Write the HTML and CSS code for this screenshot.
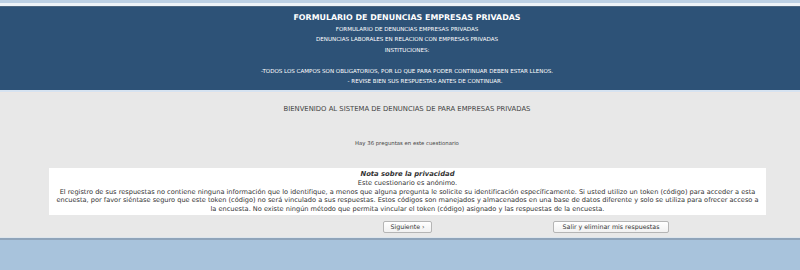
FILE: index.html
```html
<!DOCTYPE html>
<html lang="es">
<head>
<meta charset="utf-8">
<title>Formulario de denuncias</title>
<link rel="stylesheet" href="styles.css">
</head>
<body>
<div class="topline"></div>
<header class="hero">
  <h1 class="hero-title">FORMULARIO DE DENUNCIAS EMPRESAS PRIVADAS</h1>
  <div class="hero-text">
    <p>FORMULARIO DE DENUNCIAS EMPRESAS PRIVADAS</p>
    <p>DENUNCIAS LABORALES EN RELACION CON EMPRESAS PRIVADAS</p>
    <p>INSTITUCIONES:</p>
    <p>&nbsp;</p>
    <p>-TODOS LOS CAMPOS SON OBLIGATORIOS, POR LO QUE PARA PODER CONTINUAR DEBEN ESTAR LLENOS.</p>
    <p class="indent">- REVISE BIEN SUS RESPUESTAS ANTES DE CONTINUAR.</p>
  </div>
</header>
<main class="content">
  <p class="welcome">BIENVENIDO AL SISTEMA DE DENUNCIAS DE PARA EMPRESAS PRIVADAS</p>
  <p class="count">Hay 36 preguntas en este cuestionario</p>
  <section class="privacy">
    <p class="privacy-title">Nota sobre la privacidad</p>
    <p>Este cuestionario es anónimo.</p>
    <p>El registro de sus respuestas no contiene ninguna información que lo identifique, a menos que alguna pregunta le solicite su identificación específicamente. Si usted utilizo un token (código) para acceder a esta encuesta, por favor siéntase seguro que este token (código) no será vinculado a sus respuestas. Estos códigos son manejados y almacenados en una base de datos diferente y solo se utiliza para ofrecer acceso a la encuesta. No existe ningún método que permita vincular el token (código) asignado y las respuestas de la encuesta.</p>
  </section>
  <div class="actions">
    <span></span>
    <button class="btn btn-next" type="button">Siguiente&nbsp;›</button>
    <button class="btn btn-exit" type="button">Salir y eliminar mis respuestas</button>
  </div>
</main>
<footer class="bottom"></footer>
</body>
</html>
```
FILE: styles.css
```css
html, body {
  margin: 0;
  padding: 0;
}
body {
  font-family: "DejaVu Sans", Verdana, sans-serif;
  background: #a8c3dc;
  height: 270px;
  overflow: hidden;
}
p { margin: 0; }

.topline {
  height: 3px;
  background: #bcd0e4;
  border-bottom: 3px solid #eef3f8;
}
.hero {
  background: #2d5277;
  border-top: 1px solid #4b6580;
  border-bottom: 2px solid #d6e3f1;
  color: #ffffff;
  text-align: center;
  padding: 5px 0 3.6px 14px;
}
.hero-title {
  margin: 0;
  font-size: 7.9px;
  font-weight: bold;
  line-height: 12px;
}
.hero-text {
  font-size: 5.55px;
  line-height: 10.4px;
}
.hero-text .indent { padding-left: 36px; }

.content {
  background: #e8e8e8;
  border-top: 1px solid #ece7e4;
  padding: 0 0 4px 14px;
  border-bottom: 1px solid #dde5ec;
  box-shadow: 0 2px 0 #8fa4ba;
  margin-bottom: 2px;
  color: #3a3a3a;
}
.welcome {
  text-align: center;
  font-size: 6.85px;
  line-height: 10px;
  padding-top: 11px;
  color: #444;
}
.count {
  text-align: center;
  font-size: 5.35px;
  line-height: 8px;
  margin-top: 25px;
  color: #444;
}
.privacy {
  background: #ffffff;
  margin: 21px 34px 0 35px;
  padding: 2px 4px 1.2px;
  text-align: center;
  font-size: 6.6px;
  line-height: 8.7px;
  color: #333;
}
.privacy .privacy-title {
  font-weight: bold;
  font-style: italic;
  font-size: 6.8px;
  line-height: 9px;
}
.actions {
  display: grid;
  grid-template-columns: 1fr 1fr 1fr;
  margin: 6px 34px 0 35px;
  align-items: center;
}
.btn {
  font-family: "DejaVu Sans", Verdana, sans-serif;
  font-size: 6.3px;
  height: 12px;
  padding: 0 4px;
  line-height: 10px;
  color: #333;
  background: linear-gradient(#ffffff, #f1f1f1);
  border: 1px solid #b5b5b5;
  border-radius: 2px;
  cursor: pointer;
}
.btn-next {
  justify-self: center;
  width: 49px;
}
.btn-exit {
  justify-self: start;
  margin-left: 26px;
  width: 116px;
}
.bottom {
  height: 40px;
  background: #a8c3dc;
}
```
